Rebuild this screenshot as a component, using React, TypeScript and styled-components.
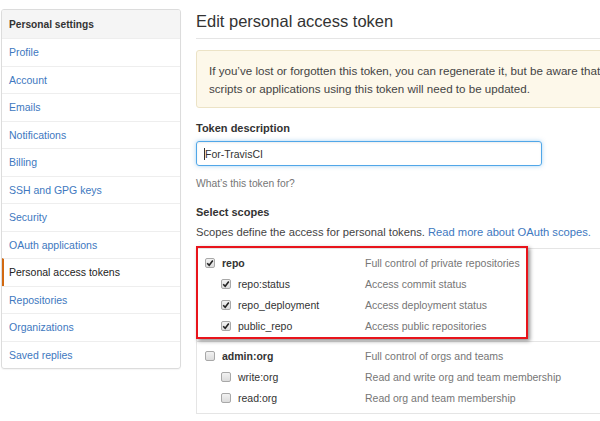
import React from "react";
import styled, { createGlobalStyle } from "styled-components";

const Global = createGlobalStyle`
  html, body { margin: 0; padding: 0; overflow: hidden; background: #fff; }
  body { font-family: "Liberation Sans", Arial, sans-serif; color: #333; }
  * { box-sizing: border-box; }
`;

const Page = styled.div`
  display: flex;
  align-items: flex-start;
  gap: 15px;
  padding: 9px 0 0 1px;
  width: 760px;
`;

const Sidebar = styled.nav`
  width: 180px;
  flex: none;
  border: 1px solid #dcdcdc;
  border-radius: 3px;
  box-shadow: 0 1px 1px rgba(0, 0, 0, 0.04);
  overflow: hidden;
`;

const SidebarHeader = styled.div`
  height: 28px;
  display: flex;
  align-items: center;
  padding-left: 7px;
  background: #f5f5f5;
  font-size: 10.2px;
  font-weight: bold;
  color: #333;
`;

const SidebarItem = styled.a<{ $active?: boolean }>`
  display: flex;
  align-items: center;
  height: 27.5px;
  padding-left: ${(p) => (p.$active ? "5px" : "7px")};
  border-top: 1px solid #eee;
  border-left: ${(p) => (p.$active ? "2px solid #d26911" : "none")};
  font-size: 10.5px;
  color: ${(p) => (p.$active ? "#222" : "#4078c0")};
  text-decoration: none;
`;

const Main = styled.main`
  width: 560px;
  flex: none;
`;

const Heading = styled.h2`
  margin: 0;
  height: 30px;
  padding-top: 2px;
  font-size: 16.5px;
  font-weight: normal;
  line-height: 20px;
  color: #333;
  border-bottom: 1px solid #e5e5e5;
`;

const Flash = styled.div`
  margin-top: 11px;
  height: 58px;
  padding: 11px 12px 0;
  background: #fdf8ea;
  border: 1px solid #ece3c6;
  border-radius: 3px;
  font-size: 11.6px;
  line-height: 17.5px;
  color: #444;
  white-space: nowrap;
`;

const Label = styled.div<{ $gap?: number }>`
  margin-top: ${(p) => p.$gap ?? 13}px;
  font-size: 11px;
  font-weight: bold;
  line-height: 14px;
  color: #333;
`;

const Input = styled.div`
  margin-top: 6px;
  width: 346px;
  height: 25px;
  display: flex;
  align-items: center;
  padding-left: 7px;
  border: 1px solid #51a7e8;
  border-radius: 3px;
  box-shadow: inset 0 1px 2px rgba(0, 0, 0, 0.075), 0 0 4px rgba(81, 167, 232, 0.5);
  font-size: 10.5px;
  color: #333;
`;

const Caret = styled.span`
  width: 1px;
  height: 12px;
  background: #333;
`;

const Note = styled.div`
  margin-top: 11px;
  font-size: 10.3px;
  line-height: 14px;
  color: #767676;
`;

const Text = styled.div`
  margin-top: 6px;
  font-size: 11.2px;
  line-height: 14px;
  color: #444;
`;

const Link = styled.a`
  color: #4078c0;
  text-decoration: none;
`;

const ScopeList = styled.div`
  position: relative;
  margin-top: 9px;
  border: 1px solid #e5e5e5;
  border-bottom: none;
`;

const ScopeGroup = styled.div`
  padding: 3px 0 5px;
  border-bottom: 1px solid #e5e5e5;
`;

const ScopeRow = styled.div`
  display: grid;
  grid-template-columns: 160px 1fr;
  align-items: center;
  height: 21px;
  padding-left: 8px;
  font-size: 10.5px;
`;

const ScopeName = styled.label<{ $sub?: boolean }>`
  display: flex;
  align-items: center;
  gap: 7px;
  padding-left: ${(p) => (p.$sub ? "16px" : "0")};
  font-weight: ${(p) => (p.$sub ? "normal" : "bold")};
  color: #333;
`;

const ScopeDesc = styled.span`
  color: #767676;
`;

const Box = styled.span`
  width: 10px;
  height: 10px;
  flex: none;
  display: flex;
  align-items: center;
  justify-content: center;
  border: 1px solid #a8a8a8;
  border-radius: 2px;
  background: linear-gradient(#f2f2f2, #dcdcdc);
`;

const Highlight = styled.div`
  position: absolute;
  left: -1px;
  top: -3px;
  width: 332px;
  height: 93px;
  border: 2px solid #e8141b;
  box-shadow: 2px 2px 4px rgba(0, 0, 0, 0.45);
  pointer-events: none;
`;

const Check = ({ checked }: { checked?: boolean }) => (
  <Box>
    {checked && (
      <svg width="8" height="8" viewBox="0 0 8 8">
        <path d="M1.2 4.2 L3.2 6.2 L6.8 1.6" fill="none" stroke="#222" strokeWidth="1.6" />
      </svg>
    )}
  </Box>
);

const navItems = [
  "Profile",
  "Account",
  "Emails",
  "Notifications",
  "Billing",
  "SSH and GPG keys",
  "Security",
  "OAuth applications",
  "Personal access tokens",
  "Repositories",
  "Organizations",
  "Saved replies",
];

type Scope = { name: string; desc: string; sub?: boolean };

const groups: { checked: boolean; scopes: Scope[] }[] = [
  {
    checked: true,
    scopes: [
      { name: "repo", desc: "Full control of private repositories" },
      { name: "repo:status", desc: "Access commit status", sub: true },
      { name: "repo_deployment", desc: "Access deployment status", sub: true },
      { name: "public_repo", desc: "Access public repositories", sub: true },
    ],
  },
  {
    checked: false,
    scopes: [
      { name: "admin:org", desc: "Full control of orgs and teams" },
      { name: "write:org", desc: "Read and write org and team membership", sub: true },
      { name: "read:org", desc: "Read org and team membership", sub: true },
    ],
  },
];

export default function App() {
  return (
    <>
      <Global />
      <Page>
        <Sidebar>
          <SidebarHeader>Personal settings</SidebarHeader>
          {navItems.map((n) => (
            <SidebarItem key={n} $active={n === "Personal access tokens"}>
              {n}
            </SidebarItem>
          ))}
        </Sidebar>
        <Main>
          <Heading>Edit personal access token</Heading>
          <Flash>
            If you’ve lost or forgotten this token, you can regenerate it, but be aware that any
            <br />
            scripts or applications using this token will need to be updated.
          </Flash>
          <Label>Token description</Label>
          <Input>
            <Caret />
            For-TravisCI
          </Input>
          <Note>What’s this token for?</Note>
          <Label $gap={14}>Select scopes</Label>
          <Text>
            Scopes define the access for personal tokens. <Link>Read more about OAuth scopes.</Link>
          </Text>
          <ScopeList>
            {groups.map((g, i) => (
              <ScopeGroup key={i}>
                {g.scopes.map((s) => (
                  <ScopeRow key={s.name}>
                    <ScopeName $sub={s.sub}>
                      <Check checked={g.checked} />
                      {s.name}
                    </ScopeName>
                    <ScopeDesc>{s.desc}</ScopeDesc>
                  </ScopeRow>
                ))}
              </ScopeGroup>
            ))}
            <Highlight />
          </ScopeList>
        </Main>
      </Page>
    </>
  );
}
